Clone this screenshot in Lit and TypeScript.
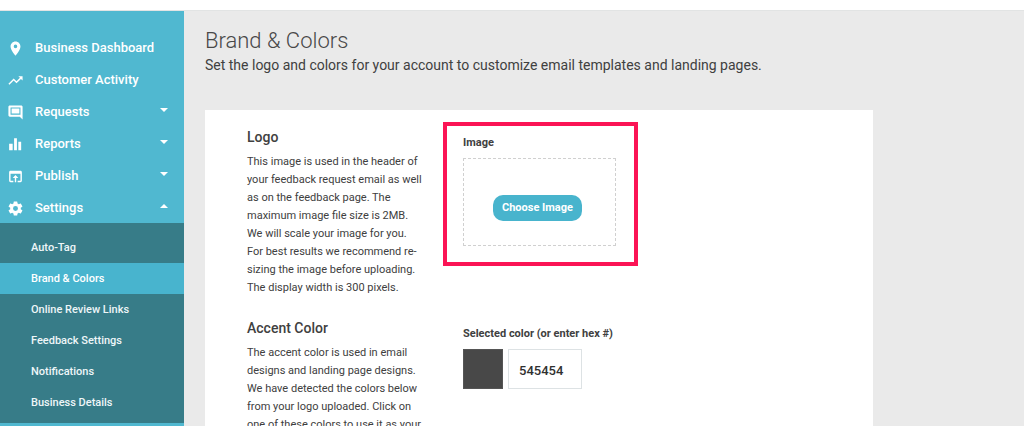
import { LitElement, html, css, svg } from "lit";
import { customElement, property, state } from "lit/decorators.js";
import { classMap } from "lit/directives/class-map.js";

interface NavEntry {
  label: string;
  icon: string;
  expandable?: boolean;
}

const ICONS: Record<string, string> = {
  pin: "M12 2C8.13 2 5 5.13 5 9c0 5.25 7 13 7 13s7-7.75 7-13c0-3.87-3.13-7-7-7zm0 9.5a2.5 2.5 0 0 1 0-5 2.5 2.5 0 0 1 0 5z",
  trend: "M16 6l2.29 2.29-4.88 4.88-4-4L2 16.59 3.41 18l6-6 4 4 6.3-6.29L22 12V6z",
  message:
    "M22 4c0-1.1-.9-2-2-2H4c-1.1 0-2 .9-2 2v12c0 1.1.9 2 2 2h14l4 4V4zM5 5h14v10H5zM6.5 6.5h11v7h-11z",
  chart: "M3 11h5v9H3zM10 3h4v17h-4zM16 8h4v12h-4z",
  publish:
    "M19 4H5c-1.11 0-2 .9-2 2v12c0 1.1.89 2 2 2h4v-2H5V8h14v10h-4v2h4c1.1 0 2-.9 2-2V6c0-1.1-.89-2-2-2zm-7 6l-4 4h3v6h2v-6h3l-4-4z",
  gear: "M19.43 12.98c.04-.32.07-.64.07-.98s-.03-.66-.07-.98l2.11-1.65c.19-.15.24-.42.12-.64l-2-3.46c-.12-.22-.39-.3-.61-.22l-2.49 1c-.52-.4-1.08-.73-1.69-.98l-.38-2.65C14.46 2.18 14.25 2 14 2h-4c-.25 0-.46.18-.49.42l-.38 2.65c-.61.25-1.17.59-1.69.98l-2.49-1c-.23-.09-.49 0-.61.22l-2 3.46c-.13.22-.07.49.12.64l2.11 1.65c-.04.32-.07.65-.07.98s.03.66.07.98l-2.11 1.65c-.19.15-.24.42-.12.64l2 3.46c.12.22.39.3.61.22l2.49-1c.52.4 1.08.73 1.69.98l.38 2.65c.03.24.24.42.49.42h4c.25 0 .46-.18.49-.42l.38-2.65c.61-.25 1.17-.59 1.69-.98l2.49 1c.23.09.49 0 .61-.22l2-3.46c.12-.22.07-.49-.12-.64l-2.11-1.65zM12 15.5a3.5 3.5 0 1 1 0-7 3.5 3.5 0 0 1 0 7z",
};

const NAV: NavEntry[] = [
  { label: "Business Dashboard", icon: "pin" },
  { label: "Customer Activity", icon: "trend" },
  { label: "Requests", icon: "message", expandable: true },
  { label: "Reports", icon: "chart", expandable: true },
  { label: "Publish", icon: "publish", expandable: true },
  { label: "Settings", icon: "gear", expandable: true },
];

const SETTINGS_PAGES = [
  "Auto-Tag",
  "Brand & Colors",
  "Online Review Links",
  "Feedback Settings",
  "Notifications",
  "Business Details",
];

@customElement("side-nav")
class SideNav extends LitElement {
  @property() current = "Brand & Colors";
  @state() private open = "Settings";

  static styles = css`
    :host {
      display: block;
      background: #50b8d0;
      color: #fff;
    }
    nav {
      padding: 20px 0;
    }
    ul {
      list-style: none;
      margin: 0;
      padding: 0;
    }
    .entry {
      box-sizing: border-box;
      width: 100%;
      height: 32px;
      display: flex;
      align-items: center;
      gap: 11px;
      padding: 2px 15px 0 7px;
      border: 0;
      background: none;
      color: inherit;
      font: 500 13px/16px Roboto, sans-serif;
      text-align: left;
      text-decoration: none;
      cursor: pointer;
    }
    .icon {
      flex: none;
      width: 17px;
      height: 17px;
      fill: currentColor;
    }
    .text {
      flex: 1;
    }
    .caret {
      flex: none;
      width: 10px;
      height: 8px;
      fill: currentColor;
      margin-bottom: 4px;
    }
    .sub {
      background: #377c88;
      padding: 9px 0 5px;
    }
    .page {
      display: block;
      padding: 0 31px;
      color: #eef6f8;
      font: 500 11px/31px Roboto, sans-serif;
      text-decoration: none;
    }
    .page.active {
      background: #48b4ce;
      color: #fff;
    }
  `;

  private toggle(label: string) {
    this.open = this.open === label ? "" : label;
  }

  private icon(name: string) {
    return html`<svg class="icon" viewBox="0 0 24 24" aria-hidden="true">
      ${svg`<path fill-rule="evenodd" d=${ICONS[name]} />`}
    </svg>`;
  }

  private entry(item: NavEntry) {
    if (!item.expandable) {
      return html`<a class="entry" href="#">
        ${this.icon(item.icon)}<span class="text">${item.label}</span>
      </a>`;
    }
    const open = this.open === item.label;
    return html`<button
      class="entry"
      type="button"
      aria-expanded=${open ? "true" : "false"}
      @click=${() => this.toggle(item.label)}
    >
      ${this.icon(item.icon)}<span class="text">${item.label}</span>
      <svg class="caret" viewBox="0 0 10 8" aria-hidden="true">
        ${svg`<path d=${open ? "M1 6l4-4 4 4z" : "M1 2h8l-4 4z"} />`}
      </svg>
    </button>`;
  }

  render() {
    return html`<nav aria-label="Main">
      <ul>
        ${NAV.map(
          (item) => html`<li>
            ${this.entry(item)}
            ${item.label === "Settings" && this.open === "Settings"
              ? html`<ul class="sub">
                  ${SETTINGS_PAGES.map(
                    (page) => html`<li>
                      <a
                        class=${classMap({ page: true, active: page === this.current })}
                        href="#"
                        >${page}</a
                      >
                    </li>`
                  )}
                </ul>`
              : ""}
          </li>`
        )}
      </ul>
    </nav>`;
  }
}

@customElement("app-root")
class AppRoot extends LitElement {
  @state() private color = "545454";

  static styles = css`
    :host {
      display: flex;
      flex-direction: column;
      height: 100vh;
      overflow: hidden;
      background: #eaeaea;
      color: #404040;
      font: 400 11px/18px Roboto, sans-serif;
    }
    .topbar {
      flex: none;
      height: 10px;
      background: #fff;
      border-bottom: 1px solid #e2e4e4;
    }
    .body {
      flex: 1;
      min-height: 0;
      display: grid;
      grid-template-columns: 184px 1fr;
    }
    main {
      padding: 16px 21px 0;
    }
    h1 {
      margin: 0;
      color: #484848;
      font-size: 22px;
      font-weight: 300;
      line-height: 28px;
    }
    .lead {
      margin: 0 0 35px;
      font-size: 14px;
      line-height: 20px;
    }
    .card {
      box-sizing: border-box;
      max-width: 668px;
      display: grid;
      grid-template-columns: 176px 1fr;
      gap: 16px 20px;
      align-items: start;
      padding: 12px 42px;
      background: #fff;
    }
    .about {
      padding-top: 5px;
    }
    h2 {
      margin: 0 0 6px;
      font-size: 14px;
      font-weight: 500;
      line-height: 20px;
    }
    .about p {
      margin: 0;
    }
    .field {
      justify-self: start;
      padding: 14px 20px 0;
    }
    .field.highlight {
      padding: 10px 18px 16px 16px;
      border: 4px solid #fb1455;
    }
    .label {
      display: block;
      margin-bottom: 8px;
      font-weight: 700;
      line-height: 14px;
    }
    .drop {
      box-sizing: border-box;
      width: 153px;
      height: 88px;
      display: flex;
      align-items: center;
      justify-content: center;
      padding: 12px 4px 0 0;
      border: 1px dashed #d0d0d0;
    }
    .choose {
      height: 26px;
      padding: 0 9px;
      border: 0;
      border-radius: 10px;
      background: #48b4cd;
      color: #fff;
      font: 700 11px/26px Roboto, sans-serif;
      cursor: pointer;
    }
    .picker {
      display: flex;
      gap: 5px;
    }
    .swatch {
      appearance: none;
      box-sizing: border-box;
      width: 40px;
      height: 40px;
      padding: 0;
      border: 1px solid #555;
      background: none;
    }
    .swatch::-webkit-color-swatch-wrapper {
      padding: 0;
    }
    .swatch::-webkit-color-swatch {
      border: 0;
      border-radius: 0;
    }
    .hex {
      box-sizing: border-box;
      width: 74px;
      height: 40px;
      padding: 2px 10px 0;
      border: 1px solid #dde2e4;
      background: #fff;
      color: #303030;
      font: 500 13px/16px Roboto, sans-serif;
    }
  `;

  private onHex(e: Event) {
    this.color = (e.target as HTMLInputElement).value.replace("#", "");
  }

  render() {
    const shade = this.color === "545454" ? "#484848" : `#${this.color}`;
    return html`
      <header class="topbar"></header>
      <div class="body">
        <side-nav></side-nav>
        <main>
          <h1>Brand &amp; Colors</h1>
          <p class="lead">
            Set the logo and colors for your account to customize email templates and landing pages.
          </p>
          <div class="card">
            <section class="about">
              <h2>Logo</h2>
              <p>
                This image is used in the header of your feedback request email as well as on the
                feedback page. The maximum image file size is 2MB. We will scale your image for you.
                For best results we recommend re-sizing the image before uploading. The display
                width is 300 pixels.
              </p>
            </section>
            <div class="field highlight">
              <label class="label" for="choose">Image</label>
              <div class="drop">
                <button class="choose" id="choose" type="button">Choose Image</button>
              </div>
            </div>
            <section class="about">
              <h2>Accent Color</h2>
              <p>
                The accent color is used in email designs and landing page designs. We have detected
                the colors below from your logo uploaded. Click on one of these colors to use it as
                your
              </p>
            </section>
            <div class="field">
              <label class="label" for="hex">Selected color (or enter hex #)</label>
              <div class="picker">
                <input
                  class="swatch"
                  type="color"
                  aria-label="Selected color"
                  .value=${shade}
                  @input=${this.onHex}
                />
                <input class="hex" id="hex" type="text" .value=${this.color} @change=${this.onHex} />
              </div>
            </div>
          </div>
        </main>
      </div>
    `;
  }
}
